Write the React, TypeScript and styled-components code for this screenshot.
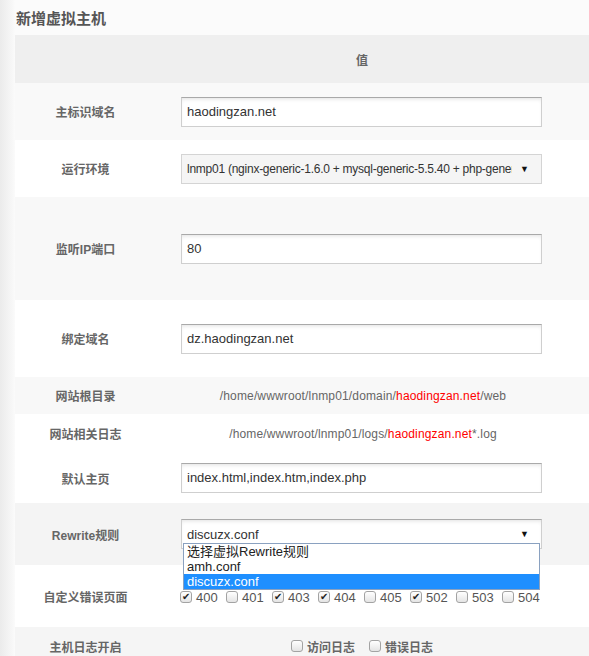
import React from 'react'
import styled, { createGlobalStyle } from 'styled-components'

const GlobalStyle = createGlobalStyle`
  html, body {
    margin: 0;
    padding: 0;
    background: #fbfbfb;
  }
  body {
    font-family: 'Liberation Sans', Arial, 'Noto Sans CJK SC', sans-serif;
    color: #555;
  }
`

const errorCodes = [
  { code: '400', checked: true },
  { code: '401', checked: false },
  { code: '403', checked: true },
  { code: '404', checked: true },
  { code: '405', checked: false },
  { code: '502', checked: true },
  { code: '503', checked: false },
  { code: '504', checked: false },
]

const rewriteOptions = ['选择虚拟Rewrite规则', 'amh.conf', 'discuzx.conf']

const Check = ({ checked }: { checked?: boolean }) => (
  <Box>{checked ? '✔' : ''}</Box>
)

export default function App() {
  return (
    <Page>
      <GlobalStyle />
      <Title>新增虚拟主机</Title>
      <Table>
        <Row $h={48} $bg="#efefef">
          <Label />
          <HeadCell>值</HeadCell>
        </Row>
        <Row $h={57} $bg="#f9f9f9">
          <Label>主标识域名</Label>
          <Field>
            <TextInput>haodingzan.net</TextInput>
          </Field>
        </Row>
        <Row $h={57} $bg="#ffffff">
          <Label>运行环境</Label>
          <Field>
            <FakeSelect $bg="#f5f5f5">
              <SelectText $size={12}>
                lnmp01 (nginx-generic-1.6.0 + mysql-generic-5.5.40 + php-generic-5.3.27)
              </SelectText>
              <Arrow>▼</Arrow>
            </FakeSelect>
          </Field>
        </Row>
        <Row $h={103} $bg="#f8f8f8">
          <Label>监听IP端口</Label>
          <Field>
            <TextInput>80</TextInput>
          </Field>
        </Row>
        <Row $h={77} $bg="#ffffff">
          <Label>绑定域名</Label>
          <Field>
            <TextInput>dz.haodingzan.net</TextInput>
          </Field>
        </Row>
        <Row $h={37} $bg="#f8f8f8">
          <Label>网站根目录</Label>
          <PathCell>
            /home/wwwroot/lnmp01/domain/<Red>haodingzan.net</Red>/web
          </PathCell>
        </Row>
        <Row $h={39} $bg="#ffffff">
          <Label>网站相关日志</Label>
          <PathCell>
            /home/wwwroot/lnmp01/logs/<Red>haodingzan.net</Red>*.log
          </PathCell>
        </Row>
        <Row $h={50} $bg="#ffffff">
          <Label>默认主页</Label>
          <Field>
            <TextInput>index.html,index.htm,index.php</TextInput>
          </Field>
        </Row>
        <Row $h={62} $bg="#f4f4f4" $top>
          <Label>Rewrite规则</Label>
          <Field>
            <SelectWrap>
              <FakeSelect $bg="#ffffff" $inset>
                <SelectText $size={13}>discuzx.conf</SelectText>
                <Arrow>▼</Arrow>
              </FakeSelect>
              <OptionList>
                {rewriteOptions.map((opt, i) => (
                  <Option key={opt} $active={i === rewriteOptions.length - 1}>
                    {opt}
                  </Option>
                ))}
              </OptionList>
            </SelectWrap>
          </Field>
        </Row>
        <Row $h={62} $bg="#ffffff">
          <Label>自定义错误页面</Label>
          <CheckRow>
            {errorCodes.map((e) => (
              <CodeItem key={e.code}>
                <Check checked={e.checked} />
                <span>{e.code}</span>
              </CodeItem>
            ))}
          </CheckRow>
        </Row>
        <Row $h={38} $bg="#f5f5f5">
          <Label>主机日志开启</Label>
          <LogCell>
            <LogItem>
              <Check />
              <span>访问日志</span>
            </LogItem>
            <LogItem>
              <Check />
              <span>错误日志</span>
            </LogItem>
          </LogCell>
        </Row>
      </Table>
    </Page>
  )
}

const Page = styled.div`
  height: 656px;
  padding-left: 15px;
  background: linear-gradient(to right, #ebebeb 0, #f7f7f7 12px, #fbfbfb 15px);
  overflow: hidden;
`

const Title = styled.div`
  height: 35px;
  line-height: 37px;
  padding-left: 1px;
  font-size: 15px;
  font-weight: bold;
  color: #555;
  font-family: 'Liberation Sans', 'Noto Sans CJK SC', sans-serif;
`

const Table = styled.div`
  display: flex;
  flex-direction: column;
`

const Row = styled.div<{ $h: number; $bg: string; $top?: boolean }>`
  display: grid;
  grid-template-columns: 140px 414px 1fr;
  align-items: center;
  flex: none;
  height: ${(p) => p.$h}px;
  background: ${(p) => p.$bg};
  position: relative;
  z-index: ${(p) => (p.$top ? 2 : 1)};
`

const Label = styled.div`
  text-align: center;
  font-size: 12px;
  font-weight: bold;
  color: #666;
  font-family: 'Liberation Sans', 'Noto Sans CJK SC', sans-serif;
  padding-left: 1px;
`

const HeadCell = styled.div`
  text-align: center;
  font-size: 12px;
  font-weight: bold;
  color: #666;
  font-family: 'Noto Sans CJK SC', sans-serif;
`

const Field = styled.div`
  padding: 0 27px 0 26px;
`

const TextInput = styled.div`
  box-sizing: border-box;
  height: 30px;
  line-height: 28px;
  padding: 0 5px;
  border: 1px solid #cfcfcf;
  border-top-color: #a9a9a9;
  background: #fff;
  box-shadow: inset 0 3px 4px -2px rgba(0, 0, 0, 0.12);
  font-size: 13px;
  color: #333;
`

const SelectWrap = styled.div`
  position: relative;
`

const FakeSelect = styled.div<{ $bg: string; $inset?: boolean }>`
  box-sizing: border-box;
  display: flex;
  align-items: center;
  height: 30px;
  padding: 0 12px 0 5px;
  border: 1px solid ${(p) => (p.$inset ? '#cfcfcf' : '#d4d4d4')};
  border-top-color: ${(p) => (p.$inset ? '#a9a9a9' : '#d4d4d4')};
  background: ${(p) => p.$bg};
  box-shadow: ${(p) => (p.$inset ? 'inset 0 3px 4px -2px rgba(0, 0, 0, 0.12)' : 'none')};
`

const SelectText = styled.div<{ $size: number }>`
  flex: 1;
  min-width: 0;
  overflow: hidden;
  white-space: nowrap;
  font-size: ${(p) => p.$size}px;
  letter-spacing: ${(p) => (p.$size === 12 ? '-0.25px' : '0')};
  color: #333;
  margin-right: 8px;
`

const Arrow = styled.span`
  flex: none;
  font-size: 9px;
  color: #111;
`

const OptionList = styled.div`
  position: absolute;
  top: 24px;
  left: 2px;
  width: 357px;
  box-sizing: border-box;
  border: 1px solid #8aa1c0;
  background: #fff;
`

const Option = styled.div<{ $active?: boolean }>`
  height: 15px;
  line-height: 15px;
  padding-left: 3px;
  font-size: 13px;
  font-family: 'Liberation Sans', 'Noto Sans CJK SC', sans-serif;
  color: ${(p) => (p.$active ? '#fff' : '#222')};
  background: ${(p) => (p.$active ? '#1e8fff' : 'transparent')};
`

const PathCell = styled.div`
  text-align: center;
  font-size: 12px;
  letter-spacing: 0.15px;
  color: #666;
  padding-left: 2px;
`

const Red = styled.span`
  color: #f00;
`

const CheckRow = styled.div`
  display: flex;
  padding-left: 25px;
  padding-top: 2px;
`

const CodeItem = styled.label`
  display: flex;
  align-items: center;
  gap: 4px;
  width: 46px;
  font-size: 13px;
  color: #555;
`

const LogCell = styled.div`
  display: flex;
  justify-content: center;
  gap: 14px;
`

const LogItem = styled.label`
  display: flex;
  align-items: center;
  gap: 4px;
  font-size: 12px;
  font-weight: bold;
  color: #666;
  font-family: 'Noto Sans CJK SC', sans-serif;
`

const Box = styled.span`
  box-sizing: border-box;
  display: inline-flex;
  align-items: center;
  justify-content: center;
  width: 12px;
  height: 12px;
  border: 1px solid #a3a3a3;
  border-radius: 3px;
  background: linear-gradient(#ffffff, #e4e4e4);
  font-size: 10px;
  line-height: 1;
  color: #222;
`
